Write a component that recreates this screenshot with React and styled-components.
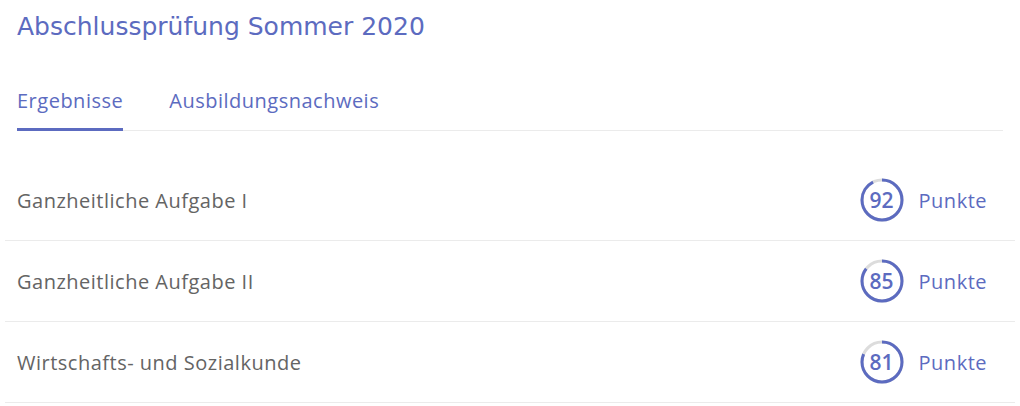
import React from "react";
import styled, { createGlobalStyle } from "styled-components";

const Global = createGlobalStyle`
  html, body { margin: 0; padding: 0; background: #fff; }
  body { font-family: "Open Sans", "Noto Sans", sans-serif; }
`;

const Page = styled.div`
  padding: 0 5px;
  width: 1010px;
`;

const Title = styled.h1`
  margin: 0;
  padding: 10px 12px 0;
  font-family: "DejaVu Sans", sans-serif;
  font-weight: 400;
  font-size: 25px;
  line-height: 34px;
  color: #5c6bc0;
`;

const Tabs = styled.div`
  margin: 45px 12px 0;
  display: flex;
  gap: 46px;
  border-bottom: 1px solid #ebebeb;
`;

const Tab = styled.div`
  font-size: 20px;
  letter-spacing: 0.5px;
  color: #5c6bc0;
  line-height: 24px;
  padding-bottom: 15px;
  margin-bottom: -1px;
  border-bottom: 3px solid ${(p) => (p.$active ? "#5c6bc0" : "transparent")};
`;

const List = styled.div`
  margin-top: 29px;
`;

const Row = styled.div`
  height: 80px;
  display: flex;
  align-items: center;
  justify-content: space-between;
  padding: 0 28px 0 12px;
  border-bottom: 1px solid #ebebeb;
`;

const Label = styled.div`
  font-size: 20px;
  letter-spacing: 0.5px;
  color: #646464;
`;

const Score = styled.div`
  display: flex;
  align-items: center;
  gap: 15px;
`;

const Ring = styled.div`
  position: relative;
  width: 44px;
  height: 44px;
  display: flex;
  align-items: center;
  justify-content: center;
  svg { position: absolute; inset: 0; }
`;

const Num = styled.span`
  position: relative;
  font-size: 21px;
  font-weight: 600;
  color: #5c6bc0;
`;

const Unit = styled.span`
  font-size: 20px;
  letter-spacing: 0.5px;
  color: #5c6bc0;
`;

function Progress({ value }) {
  const r = 20;
  const c = 2 * Math.PI * r;
  return (
    <Ring>
      <svg width="44" height="44" viewBox="0 0 44 44">
        <circle cx="22" cy="22" r={r} fill="none" stroke="#dcdcdc" strokeWidth="3" />
        <circle
          cx="22"
          cy="22"
          r={r}
          fill="none"
          stroke="#5c6bc0"
          strokeWidth="3"
          strokeDasharray={`${(c * value) / 100} ${c}`}
          transform="rotate(-90 22 22)"
        />
      </svg>
      <Num>{value}</Num>
    </Ring>
  );
}

const rows = [
  { name: "Ganzheitliche Aufgabe I", score: 92 },
  { name: "Ganzheitliche Aufgabe II", score: 85 },
  { name: "Wirtschafts- und Sozialkunde", score: 81 },
];

export default function App() {
  return (
    <Page>
      <Global />
      <Title>Abschlussprüfung Sommer 2020</Title>
      <Tabs>
        <Tab $active>Ergebnisse</Tab>
        <Tab>Ausbildungsnachweis</Tab>
      </Tabs>
      <List>
        {rows.map((r) => (
          <Row key={r.name}>
            <Label>{r.name}</Label>
            <Score>
              <Progress value={r.score} />
              <Unit>Punkte</Unit>
            </Score>
          </Row>
        ))}
      </List>
    </Page>
  );
}
